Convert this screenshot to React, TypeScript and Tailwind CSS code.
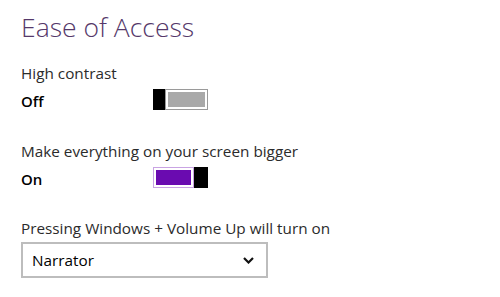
import React from "react";

const Toggle: React.FC<{ on: boolean }> = ({ on }) => (
  <div className="flex h-[21px] w-[55px]">
    {!on && <div className="w-[12px] bg-black" />}
    <div
      className={
        on
          ? "flex-1 border border-[#c9a3e3] p-[2px]"
          : "flex-1 border border-[#9a9a9a] p-[2px]"
      }
    >
      <div className={on ? "h-full w-full bg-[#6a0bb0]" : "h-full w-full bg-[#a9a9a9]"} />
    </div>
    {on && <div className="w-[14px] bg-black" />}
  </div>
);

export default function App() {
  return (
    <div className="h-[297px] w-[500px] bg-white pl-[21px] pt-[8px] font-['Open_Sans',sans-serif] text-[#2b2b2b]">
      <h1 className="text-[26.5px] font-light leading-[38px] text-[#55386a]">Ease of Access</h1>

      <div className="mt-[17px]">
        <div className="text-[15.3px] leading-[20px]">High contrast</div>
        <div className="mt-[6px] flex h-[21px] items-center">
          <div className="mt-[4px] w-[132px] text-[15px] font-semibold text-black">Off</div>
          <Toggle on={false} />
        </div>
      </div>

      <div className="mt-[31px]">
        <div className="text-[15.3px] leading-[20px]">Make everything on your screen bigger</div>
        <div className="mt-[6px] flex h-[21px] items-center">
          <div className="mt-[4px] w-[132px] text-[15px] font-semibold text-black">On</div>
          <Toggle on={true} />
        </div>
      </div>

      <div className="mt-[30px]">
        <div className="text-[15.3px] leading-[20px]">Pressing Windows + Volume Up will turn on</div>
        <div className="mt-[4px] flex h-[36px] w-[247px] items-center justify-between border-2 border-[#bdbdbd] pl-[9px] pr-[12px]">
          <span className="text-[15.3px] text-black">Narrator</span>
          <svg width="11" height="7" viewBox="0 0 11 7">
            <path d="M1 1 L5.5 5.5 L10 1" fill="none" stroke="#111" strokeWidth="2.2" />
          </svg>
        </div>
      </div>
    </div>
  );
}
